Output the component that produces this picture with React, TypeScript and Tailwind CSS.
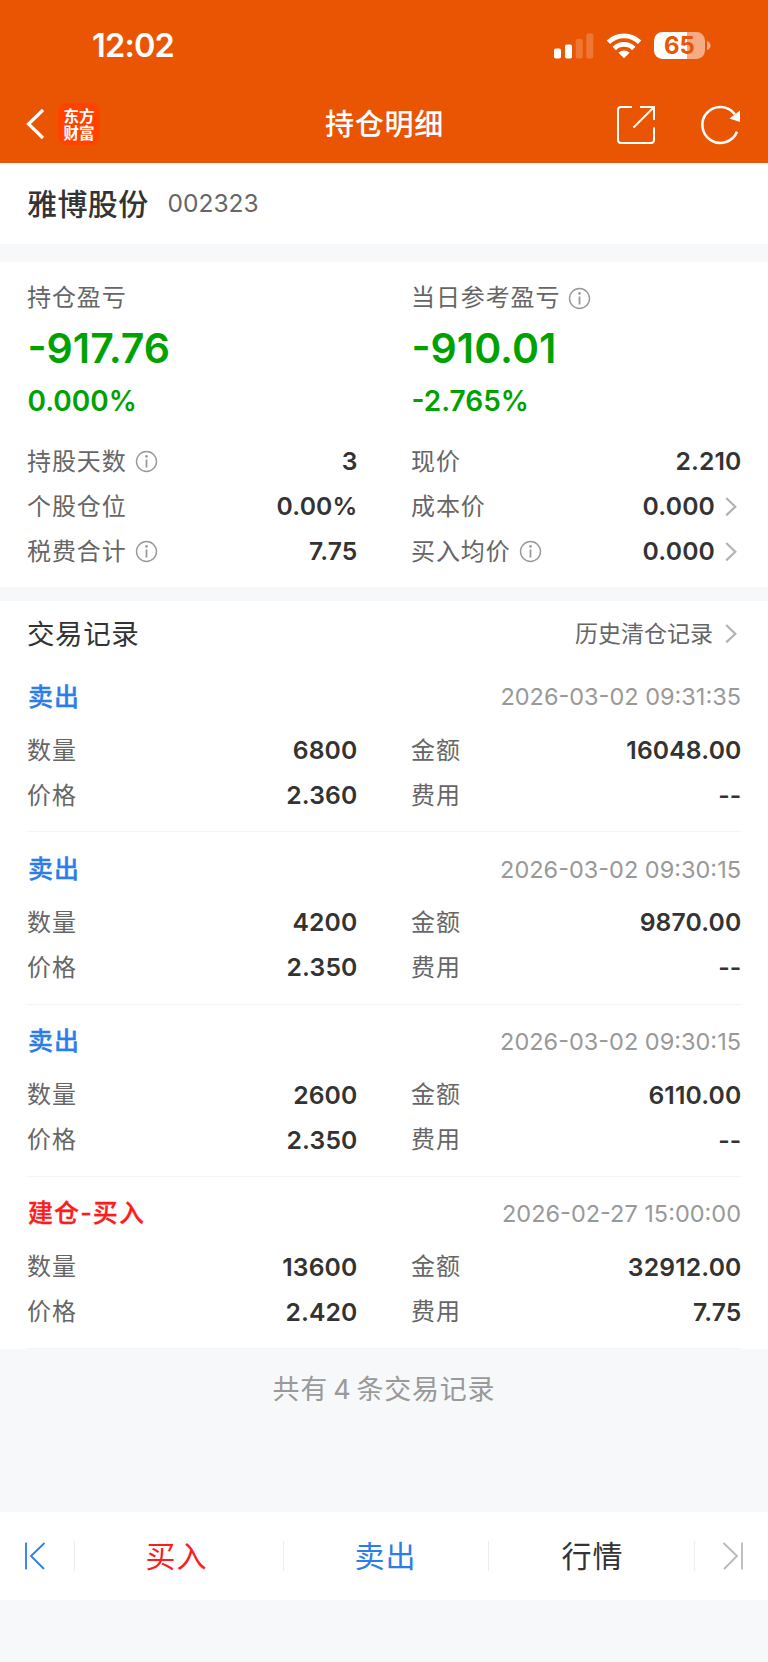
import React from 'react';

interface Field {
    label: string;
    value: string;
    info?: boolean;
    link?: boolean;
}

interface TradeRecord {
    id: number;
    type: 'sell' | 'open';
    title: string;
    time: string;
    quantity: string;
    price: string;
    amount: string;
    fee: string;
}

const leftFields: Field[] = [
    { label: '持股天数', value: '3', info: true },
    { label: '个股仓位', value: '0.00%' },
    { label: '税费合计', value: '7.75', info: true },
];

const rightFields: Field[] = [
    { label: '现价', value: '2.210' },
    { label: '成本价', value: '0.000', link: true },
    { label: '买入均价', value: '0.000', info: true, link: true },
];

const records: TradeRecord[] = [
    { id: 1, type: 'sell', title: '卖出', time: '2026-03-02 09:31:35', quantity: '6800', price: '2.360', amount: '16048.00', fee: '--' },
    { id: 2, type: 'sell', title: '卖出', time: '2026-03-02 09:30:15', quantity: '4200', price: '2.350', amount: '9870.00', fee: '--' },
    { id: 3, type: 'sell', title: '卖出', time: '2026-03-02 09:30:15', quantity: '2600', price: '2.350', amount: '6110.00', fee: '--' },
    { id: 4, type: 'open', title: '建仓-买入', time: '2026-02-27 15:00:00', quantity: '13600', price: '2.420', amount: '32912.00', fee: '7.75' },
];

const InfoIcon = () => (
    <svg className="ml-2 shrink-0" width="23" height="23" viewBox="0 0 23 23" fill="none">
        <circle cx="11.5" cy="11.5" r="10" stroke="#999" strokeWidth="1.4" />
        <circle cx="11.5" cy="6.4" r="1.3" fill="#999" />
        <path d="M11.5 9.5V17.5" stroke="#999" strokeWidth="1.8" />
    </svg>
);

const ChevronIcon = () => (
    <svg className="mr-1 shrink-0" width="12" height="20" viewBox="0 0 12 20" fill="none">
        <path d="M1.2 1L10.3 9.7L1.2 18.4" stroke="#b3b3b3" strokeWidth="2.2" />
    </svg>
);

const StatusBar = () => (
    <div className="flex h-[91px] items-center justify-between pl-[92px] pr-[57px]">
        <span className="pt-0.5 text-[32.5px] font-semibold leading-none tracking-[-0.8px]">12:02</span>
        <div className="flex items-center">
            <svg width="40" height="26" viewBox="0 0 40 26" fill="#fff">
                <rect x="0" y="15.5" width="7" height="10" rx="1.8" />
                <rect x="11" y="11.5" width="7" height="14" rx="1.8" />
                <rect x="21.7" y="6" width="7" height="19.5" rx="1.8" opacity="0.2" />
                <rect x="32.3" y="0.5" width="7" height="25" rx="1.8" opacity="0.2" />
            </svg>
            <svg className="ml-3" width="36" height="26" viewBox="0 0 36 26" fill="none" stroke="#fff" strokeWidth="4.9">
                <path d="M2.4 9.2A22.3 22.3 0 0 1 33.6 9.2" />
                <path d="M8.2 15.4A14 14 0 0 1 27.8 15.4" />
                <path d="M18 25.3L12.5 19.8A7.8 7.8 0 0 1 23.5 19.8Z" fill="#fff" stroke="none" />
            </svg>
            <div className="ml-3 flex items-center">
                <div className="flex h-[27px] w-[51px] items-center justify-center rounded-[8.5px] bg-[linear-gradient(90deg,#fff_65%,#f5ab83_65%)] text-[24px] font-bold leading-none text-[#ea5504]">
                    65
                </div>
                <svg className="ml-[2px]" width="4" height="9" viewBox="0 0 4 9">
                    <path d="M0 0Q3.5 1.5 3.5 4.5T0 9Z" fill="#f5ab83" />
                </svg>
            </div>
        </div>
    </div>
);

const NavBar = () => (
    <div className="flex h-[72px] items-center pb-[5px] pl-[26px] pr-[26px]">
        <div className="flex flex-1 items-center pb-px">
            <svg width="19" height="32" viewBox="0 0 19 32" fill="none">
                <path d="M17 2L2.5 16L17 30" stroke="#fff" strokeWidth="3.2" />
            </svg>
            <div className="ml-[13px] flex h-[42px] w-[42px] items-center justify-center rounded-[9px] bg-[#ff4200]">
                <p className="font-['Noto_Sans_CJK_SC',sans-serif] text-[15.5px] font-bold leading-[17.5px]">
                    东方
                    <br />
                    财富
                </p>
            </div>
        </div>
        <h1 className="pl-px text-[29px] font-medium leading-none tracking-[0.7px]">持仓明细</h1>
        <div className="flex flex-1 items-center justify-end">
            <svg width="40" height="40" viewBox="0 0 40 40" fill="none" stroke="#fff" strokeWidth="2">
                <path d="M16 2H5Q2 2 2 5V35Q2 38 5 38H35Q38 38 38 35V22.5" />
                <path d="M24 2H38V15M37.5 2.5L17.5 22.5" />
            </svg>
            <svg className="ml-11" width="42" height="40" viewBox="0 0 42 40" fill="none">
                <path d="M37 26.8A18 18 0 1 1 34.8 9.2" stroke="#fff" strokeWidth="2.6" />
                <path d="M40 5.5V17L29.5 13.4Z" fill="#fff" />
            </svg>
        </div>
    </div>
);

const Label = ({ children }: { children: React.ReactNode }) => (
    <span className="whitespace-nowrap text-[24px] leading-none tracking-[0.9px] text-[#666]">{children}</span>
);

const FieldRow = ({ field }: { field: Field }) => (
    <div className="flex h-[45px] items-center">
        <Label>{field.label}</Label>
        {field.info && <InfoIcon />}
        <span className="ml-auto mr-[-0.5px] text-[24.7px] font-semibold leading-none tracking-[0.15px] text-[#333]">{field.value}</span>
        {field.link && (
            <span className="ml-[10.5px]">
                <ChevronIcon />
            </span>
        )}
    </div>
);

const Profit = ({ label, amount, percent, info }: { label: string; amount: string; percent: string; info?: boolean }) => (
    <div>
        <div className="flex h-11 items-center">
            <Label>{label}</Label>
            {info && <InfoIcon />}
        </div>
        <div className="flex h-14 items-center pl-[0.5px] text-[41px] font-semibold leading-none text-[#00a200]">{amount}</div>
        <div className="flex h-[50px] items-center pl-[0.5px] text-[28px] font-semibold leading-none text-[#00a200]">{percent}</div>
    </div>
);

const RecordItem = ({ record }: { record: TradeRecord }) => (
    <div className="h-[172.25px] border-b border-[#f3f4f5] pt-[14px]">
        <div className="flex h-[46px] items-center justify-between">
            <span
                className={`pl-px text-[25px] font-medium leading-none tracking-[1.1px] [-webkit-text-stroke:0.3px] ${
                    record.type === 'sell' ? 'text-[#2b7de9]' : 'text-[#fb1d1d]'
                }`}
            >
                {record.title}
            </span>
            <span className="text-[23.5px] leading-none text-[#999]">{record.time}</span>
        </div>
        <div className="mt-2 grid grid-cols-2 gap-x-[54px]">
            <FieldRow field={{ label: '数量', value: record.quantity }} />
            <FieldRow field={{ label: '金额', value: record.amount }} />
            <FieldRow field={{ label: '价格', value: record.price }} />
            <FieldRow field={{ label: '费用', value: record.fee }} />
        </div>
    </div>
);

const BottomBar = () => (
    <div className="flex h-[88px] items-center bg-white text-[30px] leading-none tracking-[1px]">
        <button className="flex w-[74px] justify-start pl-[24px]">
            <svg width="22" height="28" viewBox="0 0 22 28" fill="none" stroke="#2b7de9" strokeWidth="1.8">
                <path d="M2 0.5V27.5M20.5 1L7 14L20 27" />
            </svg>
        </button>
        <button className="h-[30px] flex-1 border-x border-[#eee] pr-[5px] text-[#fb1d1d]">买入</button>
        <button className="h-[30px] flex-1 pr-px text-[#2b7de9]">卖出</button>
        <button className="h-[30px] flex-1 border-x border-[#eee] pl-[2px] text-[#333]">行情</button>
        <button className="flex w-[73px] justify-end pr-[24px]">
            <svg width="22" height="28" viewBox="0 0 22 28" fill="none" stroke="#b8b8b8" strokeWidth="1.8">
                <path d="M20 0.5V27.5M1.5 1L15 14L2 27" />
            </svg>
        </button>
    </div>
);

const App: React.FC = () => {
    return (
        <div className="flex h-[1662px] w-[768px] flex-col bg-[#f6f8fa] font-['Inter','Noto_Sans_CJK_SC',sans-serif]">
            <header className="h-[163px] bg-[#ea5504] text-white">
                <StatusBar />
                <NavBar />
            </header>

            <section className="flex h-[81px] items-center bg-white px-[27px]">
                <h2 className="text-[30px] font-medium leading-none tracking-[0.4px] text-[#333]">雅博股份</h2>
                <span className="ml-[19px] text-[24.5px] leading-none text-[#666]">002323</span>
            </section>

            {/* Profit and holding summary */}
            <section className="mt-[18px] h-[325px] bg-white px-[27px] pt-[14px]">
                <div className="grid grid-cols-2 gap-x-[54px]">
                    <Profit label="持仓盈亏" amount="-917.76" percent="0.000%" />
                    <Profit label="当日参考盈亏" amount="-910.01" percent="-2.765%" info />
                </div>
                <div className="mt-[13px] grid grid-cols-2 gap-x-[54px]">
                    <div>
                        {leftFields.map((field) => (
                            <FieldRow key={field.label} field={field} />
                        ))}
                    </div>
                    <div>
                        {rightFields.map((field) => (
                            <FieldRow key={field.label} field={field} />
                        ))}
                    </div>
                </div>
            </section>

            {/* Trade records */}
            <section className="mt-[14px] bg-white px-[27px]">
                <div className="flex h-[59px] items-center justify-between pt-[7px]">
                    <h3 className="pt-px text-[27.5px] leading-none tracking-[0.6px] text-[#333]">交易记录</h3>
                    <div className="flex items-center gap-3 text-[23px] leading-none text-[#666]">
                        历史清仓记录
                        <ChevronIcon />
                    </div>
                </div>
                {records.map((record) => (
                    <RecordItem key={record.id} record={record} />
                ))}
            </section>

            <p className="pt-[27px] text-center text-[27px] leading-none tracking-[0.8px] text-[#999]">
                共有<span className="mx-[5px]">4</span>条交易记录
            </p>

            <div className="mb-[62px] mt-auto">
                <BottomBar />
            </div>
        </div>
    );
};

export default App;
